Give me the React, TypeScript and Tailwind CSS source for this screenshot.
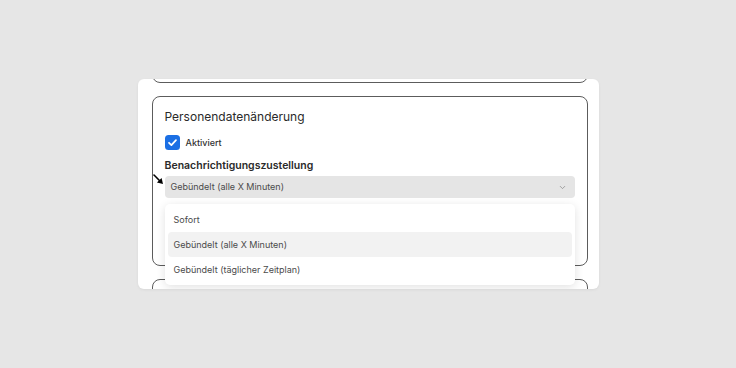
import { ChevronDown } from "lucide-react";

const font = { fontFamily: "Inter, 'Noto Sans', sans-serif" };

function Checkbox() {
  return (
    <span className="flex h-[15px] w-[15px] items-center justify-center rounded-[3.5px] bg-[#1b6fe4]">
      <svg width="11" height="11" viewBox="0 0 12 12" fill="none">
        <path d="M2.2 6.3 4.8 8.8 9.8 3.4" stroke="white" strokeWidth="1.9" strokeLinecap="round" strokeLinejoin="round" />
      </svg>
    </span>
  );
}

function Cursor() {
  return (
    <svg className="absolute -left-[12px] -top-[2px]" width="11" height="11" viewBox="0 0 11 11">
      <path d="M1 1 7.2 7.2" stroke="black" strokeWidth="1.6" strokeLinecap="round" />
      <path d="M10 10 3.9 8.6 8.6 3.9Z" fill="black" />
    </svg>
  );
}

const options = ["Sofort", "Gebündelt (alle X Minuten)", "Gebündelt (täglicher Zeitplan)"];

export default function App() {
  return (
    <div className="flex h-screen items-center justify-center bg-[#e6e6e6]" style={font}>
      <div className="h-[210px] w-[461px] overflow-hidden rounded-[6px] bg-white shadow-[0_1px_3px_rgba(0,0,0,0.06)]">
        <div className="-mt-[56px] flex flex-col gap-[13px] pl-[14px] pr-[11px]">
          <div className="h-[60px] rounded-[8px] border border-[#5c5c5c]" />

          <div className="h-[170px] rounded-[8px] border border-[#5c5c5c] px-[12px] pt-[12px]">
            <h3 className="text-[12px] leading-4 text-[#2a2a2a]">Personendatenänderung</h3>
            <label className="mt-[10px] flex items-center gap-[6px]">
              <Checkbox />
              <span className="text-[9px] font-medium text-[#333]">Aktiviert</span>
            </label>
            <div className="mt-[8px] text-[10.5px] font-semibold leading-4 text-[#2a2a2a]">
              Benachrichtigungszustellung
            </div>
            <div className="relative mt-[2px]">
              <Cursor />
              <div className="flex h-[22px] items-center justify-between rounded-[4px] bg-[#e5e5e5] pl-[6px] pr-[8px]">
                <span className="text-[9px] text-[#4a4a4a]">Gebündelt (alle X Minuten)</span>
                <ChevronDown size={9} strokeWidth={2} className="text-[#8a8a8a]" />
              </div>
              <div className="absolute left-0 right-0 top-[28px] z-10 rounded-[5px] bg-white p-[3px] shadow-[0_2px_10px_rgba(0,0,0,0.12)]">
                {options.map((o, i) => (
                  <div
                    key={o}
                    className={
                      "flex h-[25px] items-center rounded-[4px] px-[6px] text-[9px] text-[#4a4a4a] " +
                      (i === 1 ? "bg-[#f2f2f2]" : "")
                    }
                  >
                    {o}
                  </div>
                ))}
              </div>
            </div>
          </div>

          <div className="h-[60px] rounded-[8px] border border-[#5c5c5c]" />
        </div>
      </div>
    </div>
  );
}
